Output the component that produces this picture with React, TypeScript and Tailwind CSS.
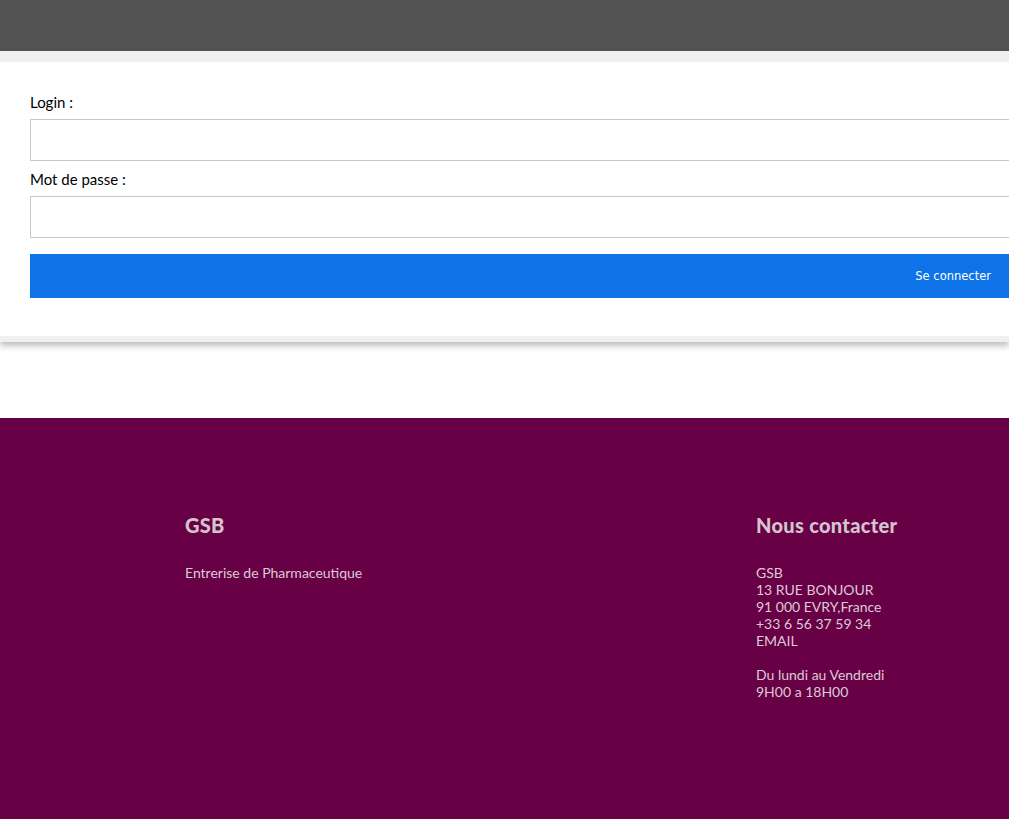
export default function App() {
  return (
    <div className="min-h-[819px] overflow-hidden bg-white font-['Lato',sans-serif]">
      <header className="h-[51px] bg-[#535353]" />

      <section className="bg-[#f0f0f0] pt-[11px] pb-[6px] shadow-[0_4px_6px_rgba(0,0,0,0.25)]">
        <form className="bg-white pl-[30px] pt-[30px] pb-[38px]">
          <label className="block text-[15px] leading-[20px] text-black">Login :</label>
          <input
            type="text"
            className="mt-[7px] block h-[42px] w-[1020px] border border-[#c8c8c8] bg-white"
          />
          <label className="mt-[8px] block text-[15px] leading-[20px] text-black">Mot de passe :</label>
          <input
            type="password"
            className="mt-[7px] block h-[42px] w-[1020px] border border-[#c8c8c8] bg-white"
          />
          <button
            type="button"
            className="mt-[16px] block h-[44px] w-[979px] bg-[#0e73e8] pr-[18px] pt-[2px] text-right font-['DejaVu_Sans',sans-serif] text-[11.5px] text-white"
          >
            Se connecter
          </button>
        </form>
      </section>

      <footer className="mt-[76px] min-h-[401px] bg-[#680046] pl-[185px] pt-[94px] text-[#dccad5]">
        <div className="grid grid-cols-[571px_1fr]">
          <div>
            <h2 className="text-[20px] leading-[26px] font-black tracking-[0.3px] text-[#d4c4ce]">GSB</h2>
            <p className="mt-[26px] text-[14px] leading-[17px]">Entrerise de Pharmaceutique</p>
          </div>
          <div>
            <h2 className="text-[20px] leading-[26px] font-black tracking-[0.3px] text-[#d4c4ce]">Nous contacter</h2>
            <p className="mt-[26px] text-[14px] leading-[17px]">
              GSB
              <br />
              13 RUE BONJOUR
              <br />
              91 000 EVRY,France
              <br />
              +33 6 56 37 59 34
              <br />
              EMAIL
              <br />
              <br />
              Du lundi au Vendredi
              <br />
              9H00 a 18H00
            </p>
          </div>
        </div>
      </footer>
    </div>
  );
}
